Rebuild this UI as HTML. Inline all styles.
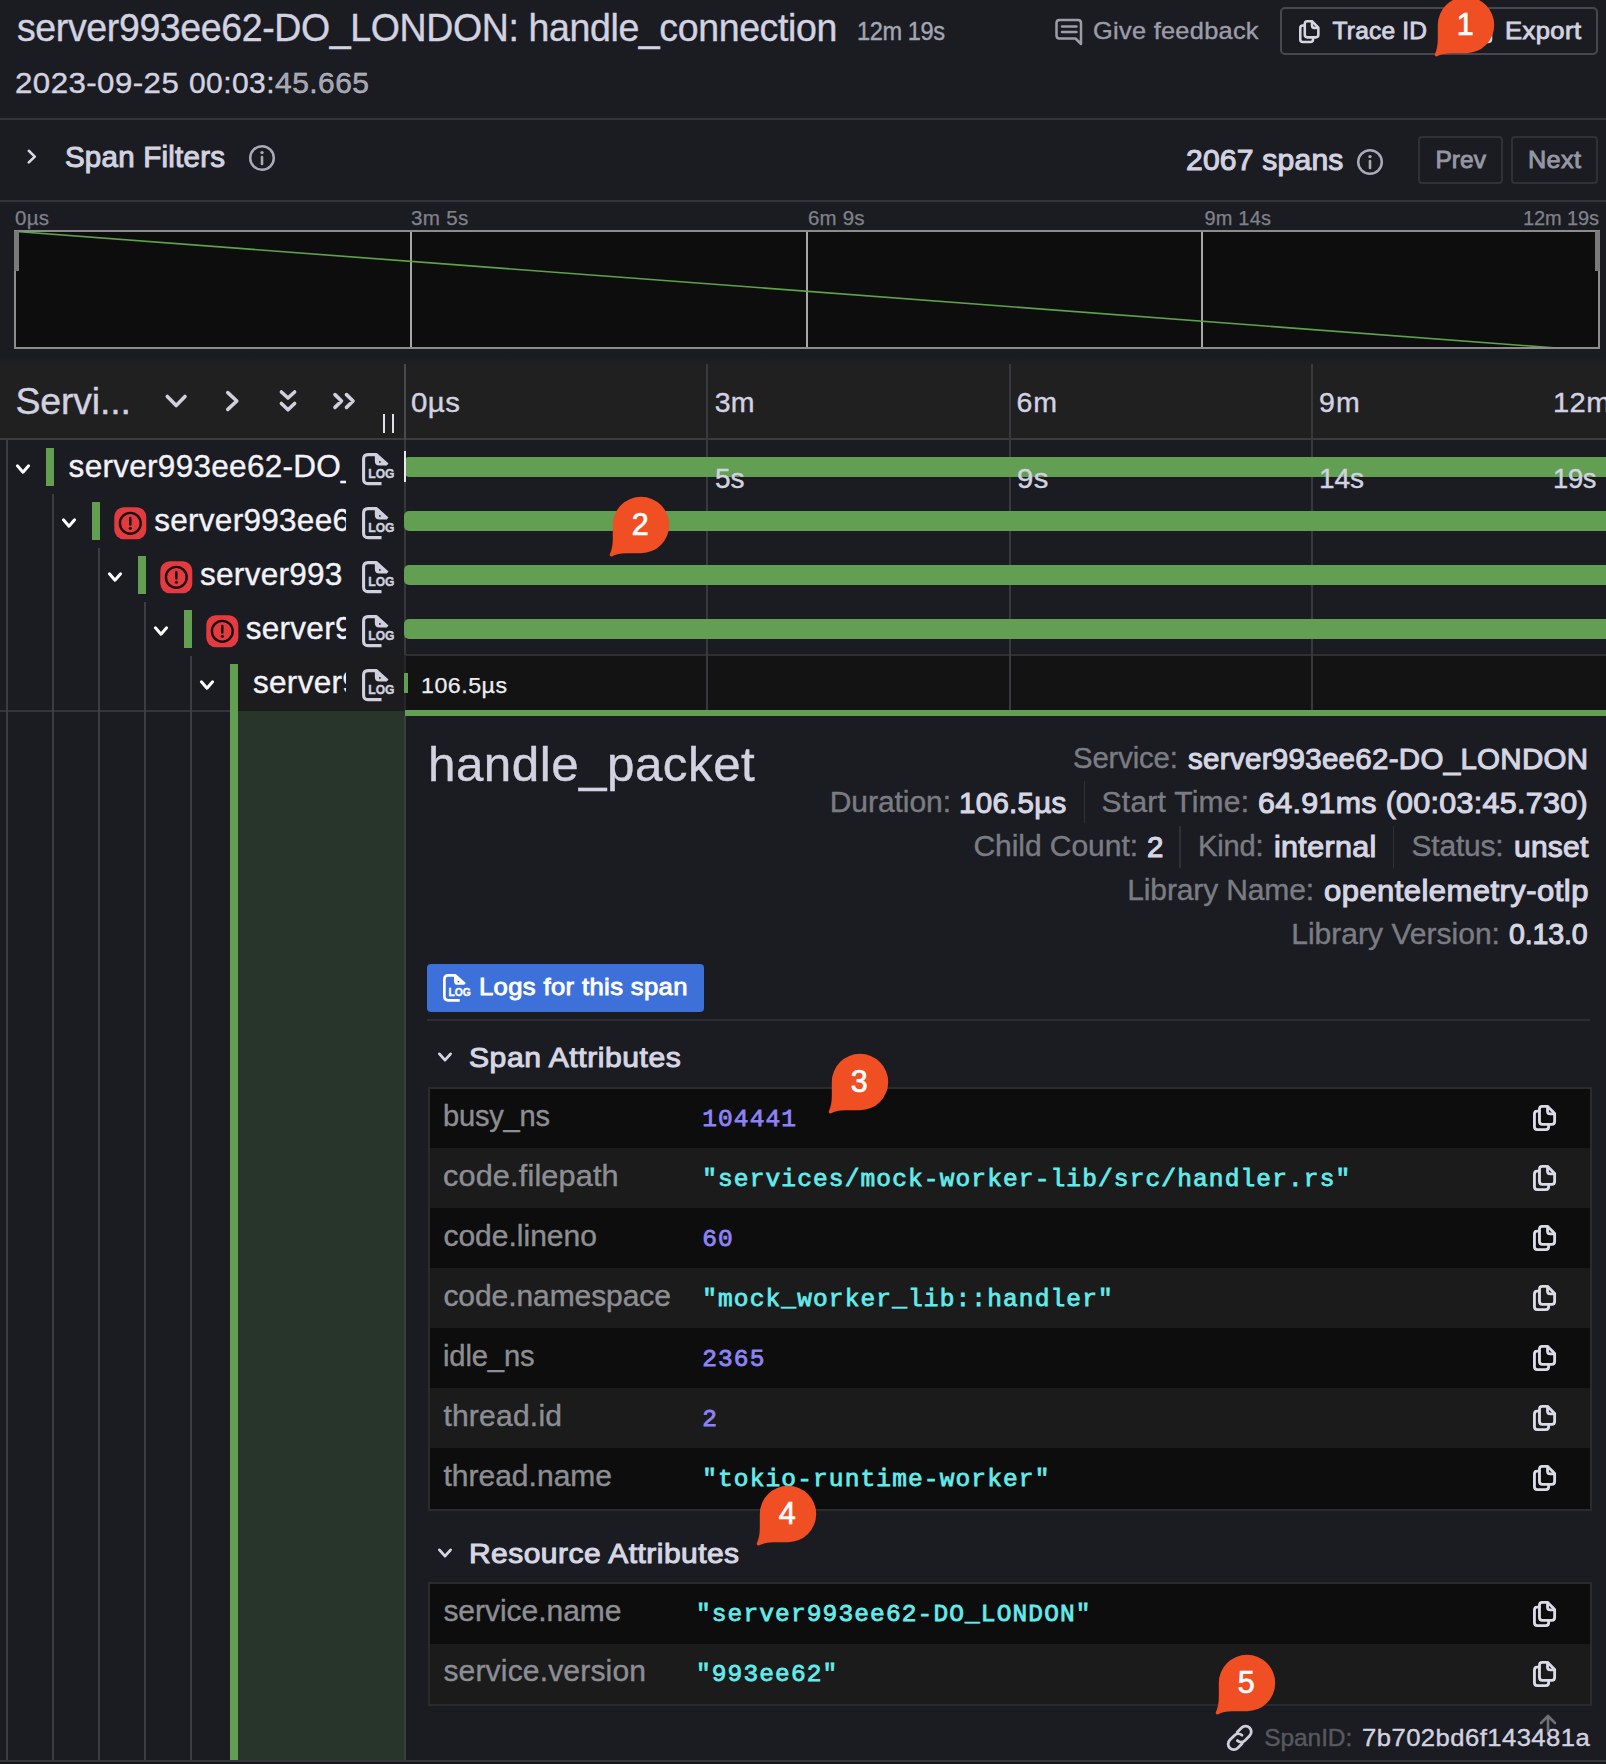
<!DOCTYPE html>
<html lang="en"><head><meta charset="utf-8"><title>Trace view</title>
<style>
html,body{margin:0;padding:0;background:#1a1c21;}
body{width:1606px;height:1764px;position:relative;overflow:hidden;font-family:"Liberation Sans",sans-serif;}
.r{position:absolute;box-sizing:content-box;display:block}
.t{position:absolute;white-space:nowrap;line-height:1;transform-origin:0 50%;}
.ls{font-family:"Liberation Sans",sans-serif;font-weight:400}
.lsb{font-family:"Liberation Sans",sans-serif;font-weight:700}
.lm{font-family:"Liberation Mono",monospace;font-weight:400}
.lmb{font-family:"Liberation Mono",monospace;font-weight:700}
</style></head><body>
<div class="t ls " style="left:17.0px;top:8.3px;font-size:39.5px;letter-spacing:-0.39px;color:#d2d2e0;transform:scaleX(0.9489);-webkit-text-stroke:0.4px #d2d2e0;">server993ee62-DO_LONDON: handle_connection</div>
<div class="t ls " style="left:856.5px;top:19.2px;font-size:25.5px;letter-spacing:-0.44px;color:#a4a5b2;transform:scaleX(0.9256);-webkit-text-stroke:0.4px #a4a5b2;">12m 19s</div>
<div class="t ls " style="left:15.0px;top:67.8px;font-size:30px;letter-spacing:0.44px;color:#d2d2e0;transform:scaleX(1.0404);-webkit-text-stroke:0.4px #d2d2e0;">2023-09-25</div>
<div class="t ls " style="left:188.9px;top:67.8px;font-size:30px;letter-spacing:0.45px;color:#d2d2e0;-webkit-text-stroke:0.4px #d2d2e0;">00:03:<span style="color:#a2a2ab">45.665</span></div>
<svg class="r" style="left:1054px;top:17px;" width="31" height="30" viewBox="0 0 31 30"><path d="M5.5 3 H24 Q27 3 27 6 V27 L21.5 21.5 H5.5 Q2.5 21.5 2.5 18.5 V6 Q2.5 3 5.5 3 Z" fill="none" stroke="#9c9da9" stroke-width="2.5" stroke-linejoin="round"/><path d="M8 9.5 H22.5 M8 15 H22.5" stroke="#9c9da9" stroke-width="2.5" stroke-linecap="round"/></svg>
<div class="t ls " style="left:1093.0px;top:18.6px;font-size:24.5px;letter-spacing:0.29px;color:#9c9da9;transform:scaleX(1.0340);-webkit-text-stroke:0.4px #9c9da9;">Give feedback</div>
<div class="r" style="left:1280.3px;top:6.5px;width:314px;height:44px;border:2px solid #47484e;border-radius:5px"></div>
<div class="r" style="left:1452px;top:7px;width:2px;height:47px;background:#47484e;"></div>
<svg class="r" style="left:1299px;top:19.5px;" width="22.1" height="24.6" viewBox="0 0 26 29"><g fill="none" stroke="#d6d6e2" stroke-width="3" stroke-linejoin="round" stroke-linecap="round"><path d="M9.8 1.5 H15.5 L22.8 9 V17.5 Q22.8 20.5 19.8 20.5 H9.8 Q6.8 20.5 6.8 17.5 V4.5 Q6.8 1.5 9.8 1.5 Z"/><path d="M15.3 2 V6.5 Q15.3 9.3 18 9.3 H22"/><path d="M6.5 6.5 H4.5 Q1.5 6.5 1.5 9.5 V23 Q1.5 26 4.5 26 H13.5 Q16.5 26 16.5 23 V21"/></g></svg>
<div class="t ls " style="left:1332.6px;top:18.6px;font-size:24.5px;letter-spacing:0.20px;color:#d2d2e0;-webkit-text-stroke:0.88px #d2d2e0;">Trace ID</div>
<svg class="r" style="left:1470px;top:19px;" width="24" height="26" viewBox="0 0 24 26"><path d="M3 14 V20 Q3 23 6 23 H18 Q21 23 21 20 V14 M12 3 V16 M7 8 L12 3 L17 8" fill="none" stroke="#d6d6e2" stroke-width="2.6" stroke-linecap="round" stroke-linejoin="round"/></svg>
<div class="t ls " style="left:1505.0px;top:18.6px;font-size:24.5px;letter-spacing:0.40px;color:#d2d2e0;transform:scaleX(1.0440);-webkit-text-stroke:0.88px #d2d2e0;">Export</div>
<div class="r" style="left:0px;top:118px;width:1606px;height:2px;background:#33343a;"></div>
<div class="r" style="left:0px;top:200px;width:1606px;height:2px;background:#33343a;"></div>
<svg class="r" style="left:24px;top:144px;" width="18" height="24" viewBox="0 0 18 24"><path d="M4.8 6.8 L10.8 12.6 L4.8 18.4" fill="none" stroke="#d8d8e4" stroke-width="2.6" stroke-linecap="round" stroke-linejoin="round"/></svg>
<div class="t ls " style="left:64.9px;top:142.3px;font-size:29.5px;letter-spacing:0.25px;color:#d2d2e0;-webkit-text-stroke:1.06px #d2d2e0;">Span Filters</div>
<svg class="r" style="left:247px;top:142.9px;" width="30" height="30" viewBox="0 0 30 30"><circle cx="15" cy="15" r="11.8" fill="none" stroke="#a9a9b7" stroke-width="2.5"/><path d="M15 14 V21" stroke="#a9a9b7" stroke-width="2.6" stroke-linecap="round"/><circle cx="15" cy="9.6" r="1.7" fill="#a9a9b7"/></svg>
<div class="t ls " style="left:1185.6px;top:145.3px;font-size:29.5px;letter-spacing:0.21px;color:#d2d2e0;transform:scaleX(1.0191);-webkit-text-stroke:1.06px #d2d2e0;">2067 spans</div>
<svg class="r" style="left:1354.8px;top:146.7px;" width="30" height="30" viewBox="0 0 30 30"><circle cx="15" cy="15" r="11.8" fill="none" stroke="#a9a9b7" stroke-width="2.5"/><path d="M15 14 V21" stroke="#a9a9b7" stroke-width="2.6" stroke-linecap="round"/><circle cx="15" cy="9.6" r="1.7" fill="#a9a9b7"/></svg>
<div class="r" style="left:1418.3px;top:136.3px;width:80.5px;height:43.5px;border:2px solid #303136;border-radius:4px"></div>
<div class="r" style="left:1510.8px;top:136.3px;width:83.5px;height:43.5px;border:2px solid #303136;border-radius:4px"></div>
<div class="t ls " style="left:1435.4px;top:148.1px;font-size:24.5px;letter-spacing:0.07px;color:#9697a3;-webkit-text-stroke:0.88px #9697a3;">Prev</div>
<div class="t ls " style="left:1528.0px;top:148.1px;font-size:24.5px;letter-spacing:0.34px;color:#9697a3;transform:scaleX(1.0313);-webkit-text-stroke:0.88px #9697a3;">Next</div>
<div class="t ls " style="left:14.7px;top:207.6px;font-size:20px;letter-spacing:0.28px;color:#80818a;transform:scaleX(1.0267);-webkit-text-stroke:0.25px #80818a;">0µs</div>
<div class="t ls " style="left:411.3px;top:207.6px;font-size:20px;letter-spacing:0.27px;color:#80818a;transform:scaleX(1.0302);-webkit-text-stroke:0.25px #80818a;">3m 5s</div>
<div class="t ls " style="left:808.0px;top:207.6px;font-size:20px;letter-spacing:0.20px;color:#80818a;transform:scaleX(1.0224);-webkit-text-stroke:0.25px #80818a;">6m 9s</div>
<div class="t ls " style="left:1204.4px;top:207.6px;font-size:20px;letter-spacing:0.20px;color:#80818a;-webkit-text-stroke:0.25px #80818a;">9m 14s</div>
<div class="t ls " style="left:1523.0px;top:207.6px;font-size:20px;letter-spacing:-0.12px;color:#80818a;-webkit-text-stroke:0.25px #80818a;">12m 19s</div>
<div class="r" style="left:14px;top:230px;width:1582px;height:115px;border:2px solid #8c8c8c;background:#0d0d0e"></div>
<div class="r" style="left:410px;top:232px;width:2px;height:115px;background:#a8a8a8;"></div>
<div class="r" style="left:805.5px;top:232px;width:2px;height:115px;background:#a8a8a8;"></div>
<div class="r" style="left:1201px;top:232px;width:2px;height:115px;background:#a8a8a8;"></div>
<svg class="r" style="left:16px;top:232px;" width="1582" height="115" viewBox="0 0 1582 115"><line x1="0" y1="-0.5" x2="1547" y2="116.5" stroke="#5fa24c" stroke-width="1.6"/></svg>
<div class="r" style="left:14px;top:231px;width:5px;height:40px;background:#7a7a7a;"></div>
<div class="r" style="left:1595px;top:231px;width:5px;height:40px;background:#7a7a7a;"></div>
<div class="r" style="left:0;top:354px;width:1606px;height:14px;background:linear-gradient(#1a1c21,#202021)"></div>
<div class="r" style="left:0px;top:368px;width:1606px;height:70px;background:#202021;"></div>
<div class="r" style="left:0px;top:438px;width:1606px;height:2px;background:#3b3b3e;"></div>
<div class="t ls " style="left:15.4px;top:383.3px;font-size:37.5px;letter-spacing:-0.16px;color:#d2d2e0;-webkit-text-stroke:0.4px #d2d2e0;">Servi...</div>
<svg class="r" style="left:160px;top:386px;" width="32" height="30" viewBox="0 0 32 30"><path d="M7.3 10.5 L16.2 19.5 L25 10.5" fill="none" stroke="#d0d0de" stroke-width="3.6" stroke-linecap="round" stroke-linejoin="round"/></svg>
<svg class="r" style="left:218px;top:386px;" width="28" height="30" viewBox="0 0 28 30"><path d="M9.8 6.6 L18.8 15 L9.8 23.4" fill="none" stroke="#d0d0de" stroke-width="3.6" stroke-linecap="round" stroke-linejoin="round"/></svg>
<svg class="r" style="left:272px;top:386px;" width="32" height="30" viewBox="0 0 32 30"><path d="M9.4 6 L16 12 L22.6 6 M9.4 17.5 L16 23.8 L22.6 17.5" fill="none" stroke="#d0d0de" stroke-width="3.6" stroke-linecap="round" stroke-linejoin="round"/></svg>
<svg class="r" style="left:328px;top:386px;" width="32" height="30" viewBox="0 0 32 30"><path d="M7 8.6 L13.5 15 L7 21.4 M18.5 8.6 L25 15 L18.5 21.4" fill="none" stroke="#d0d0de" stroke-width="3.6" stroke-linecap="round" stroke-linejoin="round"/></svg>
<div class="r" style="left:383.4px;top:414px;width:2px;height:18.5px;background:#e0e0ea;"></div>
<div class="r" style="left:392.4px;top:414px;width:2px;height:18.5px;background:#e0e0ea;"></div>
<div class="r" style="left:406px;top:655px;width:1200px;height:56px;background:#131313;"></div>
<div class="r" style="left:406px;top:654px;width:1200px;height:1.5px;background:#303033;"></div>
<div class="r" style="left:706px;top:364px;width:2px;height:347px;background:#38393c;"></div>
<div class="r" style="left:1009px;top:364px;width:2px;height:347px;background:#38393c;"></div>
<div class="r" style="left:1311px;top:364px;width:2px;height:347px;background:#38393c;"></div>
<div class="r" style="left:404px;top:364px;width:2px;height:76px;background:#48494d;"></div>
<div class="r" style="left:404px;top:440px;width:2px;height:215px;background:#37383c;"></div>
<div class="r" style="left:238px;top:655px;width:166.5px;height:56px;background:#1c1c1e;"></div>
<div class="r" style="left:404.3px;top:655px;width:1.4px;height:56px;background:#26272a;"></div>
<div class="r" style="left:0px;top:710px;width:232px;height:1.5px;background:#34353a;"></div>
<div class="t ls " style="left:411.4px;top:388.2px;font-size:28.5px;letter-spacing:0.48px;color:#d2d2e0;transform:scaleX(1.0320);-webkit-text-stroke:0.4px #d2d2e0;">0µs</div>
<div class="t ls " style="left:714.8px;top:388.2px;font-size:28.5px;letter-spacing:0.21px;color:#d2d2e0;-webkit-text-stroke:0.4px #d2d2e0;">3m</div>
<div class="t ls " style="left:1016.5px;top:388.2px;font-size:28.5px;letter-spacing:0.91px;color:#d2d2e0;-webkit-text-stroke:0.4px #d2d2e0;">6m</div>
<div class="t ls " style="left:1319.0px;top:388.2px;font-size:28.5px;letter-spacing:1.11px;color:#d2d2e0;-webkit-text-stroke:0.4px #d2d2e0;">9m</div>
<div class="t ls " style="left:1552.5px;top:388.2px;font-size:28.5px;letter-spacing:0.40px;color:#d2d2e0;transform:scaleX(1.0223);-webkit-text-stroke:0.4px #d2d2e0;">12m</div>
<div class="r" style="left:6.2px;top:440px;width:1.6px;height:1324px;background:#3c3d42;"></div>
<div class="r" style="left:52.2px;top:494px;width:1.6px;height:1270px;background:#3c3d42;"></div>
<div class="r" style="left:98.2px;top:548px;width:1.6px;height:1216px;background:#3c3d42;"></div>
<div class="r" style="left:144.2px;top:602px;width:1.6px;height:1162px;background:#3c3d42;"></div>
<div class="r" style="left:190.2px;top:656px;width:1.6px;height:1108px;background:#3c3d42;"></div>
<svg class="r" style="left:11px;top:458.8px;" width="24" height="20" viewBox="0 0 24 20"><path d="M6.4 6.8 L12 13.2 L17.6 6.8" fill="none" stroke="#ffffff" stroke-width="3" stroke-linecap="round" stroke-linejoin="round"/></svg>
<div class="r" style="left:46px;top:448px;width:8px;height:38px;background:#639f52;"></div>
<div class="t ls" style="left:68.6px;top:451.3px;width:277.4px;overflow:hidden;font-size:31.5px;letter-spacing:0.29px;color:#f2f2f8;height:42px;-webkit-text-stroke:0.4px #f2f2f8">server993ee62-DO_LONDON</div>
<svg class="r" style="left:362px;top:453px;" width="34.0" height="33.0" viewBox="0 0 34 33"><g fill="none" stroke="#d0d0de" stroke-width="3.1" stroke-linejoin="round" stroke-linecap="butt"><path d="M19.5 30.6 H6 Q1.6 30.6 1.6 26.2 V6 Q1.6 1.6 6 1.6 H14.4 L25.5 11.6"/><path d="M14.4 2.5 V8 Q14.4 11 17.4 11 H24" /></g><path d="M16 5.2 L22 10.6 H17.4 Q16 10.6 16 9.2 Z" fill="#d0d0de" stroke="#d0d0de" stroke-width="1.2" stroke-linejoin="round"/><circle cx="17.9" cy="8.9" r="0.9" fill="#1a1c21"/><text x="6.3" y="25.2" font-family="Liberation Sans,sans-serif" font-weight="700" font-size="13.6" textLength="26.2" lengthAdjust="spacingAndGlyphs" fill="#d0d0de" stroke="#d0d0de" stroke-width="0.45">LOG</text></svg>
<div class="r" style="left:404.4px;top:457px;width:1202px;height:20px;background:#639f52;border-radius:5px 0 0 5px"></div>
<svg class="r" style="left:57px;top:512.8px;" width="24" height="20" viewBox="0 0 24 20"><path d="M6.4 6.8 L12 13.2 L17.6 6.8" fill="none" stroke="#ffffff" stroke-width="3" stroke-linecap="round" stroke-linejoin="round"/></svg>
<div class="r" style="left:92px;top:502px;width:8px;height:38px;background:#639f52;"></div>
<svg class="r" style="left:113.7px;top:506.6px;" width="33" height="33" viewBox="0 0 33 33"><rect x="0.3" y="0.3" width="32" height="32" rx="9.5" fill="#e33b3f"/><circle cx="16.3" cy="16.3" r="10.4" fill="none" stroke="#1c0d0d" stroke-width="2.4"/><path d="M16.3 11 V17.6" stroke="#1c0d0d" stroke-width="2.5" stroke-linecap="round"/><circle cx="16.3" cy="21.2" r="1.55" fill="#1c0d0d"/></svg>
<div class="t ls" style="left:154.2px;top:505.3px;width:191.8px;overflow:hidden;font-size:31.5px;letter-spacing:0.29px;color:#f2f2f8;height:42px;-webkit-text-stroke:0.4px #f2f2f8">server993ee62-DO_LONDON</div>
<svg class="r" style="left:362px;top:507px;" width="34.0" height="33.0" viewBox="0 0 34 33"><g fill="none" stroke="#d0d0de" stroke-width="3.1" stroke-linejoin="round" stroke-linecap="butt"><path d="M19.5 30.6 H6 Q1.6 30.6 1.6 26.2 V6 Q1.6 1.6 6 1.6 H14.4 L25.5 11.6"/><path d="M14.4 2.5 V8 Q14.4 11 17.4 11 H24" /></g><path d="M16 5.2 L22 10.6 H17.4 Q16 10.6 16 9.2 Z" fill="#d0d0de" stroke="#d0d0de" stroke-width="1.2" stroke-linejoin="round"/><circle cx="17.9" cy="8.9" r="0.9" fill="#1a1c21"/><text x="6.3" y="25.2" font-family="Liberation Sans,sans-serif" font-weight="700" font-size="13.6" textLength="26.2" lengthAdjust="spacingAndGlyphs" fill="#d0d0de" stroke="#d0d0de" stroke-width="0.45">LOG</text></svg>
<div class="r" style="left:404.4px;top:511px;width:1202px;height:20px;background:#639f52;border-radius:5px 0 0 5px"></div>
<svg class="r" style="left:103px;top:566.8px;" width="24" height="20" viewBox="0 0 24 20"><path d="M6.4 6.8 L12 13.2 L17.6 6.8" fill="none" stroke="#ffffff" stroke-width="3" stroke-linecap="round" stroke-linejoin="round"/></svg>
<div class="r" style="left:138px;top:556px;width:8px;height:38px;background:#639f52;"></div>
<svg class="r" style="left:159.7px;top:560.6px;" width="33" height="33" viewBox="0 0 33 33"><rect x="0.3" y="0.3" width="32" height="32" rx="9.5" fill="#e33b3f"/><circle cx="16.3" cy="16.3" r="10.4" fill="none" stroke="#1c0d0d" stroke-width="2.4"/><path d="M16.3 11 V17.6" stroke="#1c0d0d" stroke-width="2.5" stroke-linecap="round"/><circle cx="16.3" cy="21.2" r="1.55" fill="#1c0d0d"/></svg>
<div class="t ls" style="left:200px;top:559.3px;width:146.0px;overflow:hidden;font-size:31.5px;letter-spacing:0.29px;color:#f2f2f8;height:42px;-webkit-text-stroke:0.4px #f2f2f8">server993</div>
<svg class="r" style="left:362px;top:561px;" width="34.0" height="33.0" viewBox="0 0 34 33"><g fill="none" stroke="#d0d0de" stroke-width="3.1" stroke-linejoin="round" stroke-linecap="butt"><path d="M19.5 30.6 H6 Q1.6 30.6 1.6 26.2 V6 Q1.6 1.6 6 1.6 H14.4 L25.5 11.6"/><path d="M14.4 2.5 V8 Q14.4 11 17.4 11 H24" /></g><path d="M16 5.2 L22 10.6 H17.4 Q16 10.6 16 9.2 Z" fill="#d0d0de" stroke="#d0d0de" stroke-width="1.2" stroke-linejoin="round"/><circle cx="17.9" cy="8.9" r="0.9" fill="#1a1c21"/><text x="6.3" y="25.2" font-family="Liberation Sans,sans-serif" font-weight="700" font-size="13.6" textLength="26.2" lengthAdjust="spacingAndGlyphs" fill="#d0d0de" stroke="#d0d0de" stroke-width="0.45">LOG</text></svg>
<div class="r" style="left:404.4px;top:565px;width:1202px;height:20px;background:#639f52;border-radius:5px 0 0 5px"></div>
<svg class="r" style="left:149px;top:620.8px;" width="24" height="20" viewBox="0 0 24 20"><path d="M6.4 6.8 L12 13.2 L17.6 6.8" fill="none" stroke="#ffffff" stroke-width="3" stroke-linecap="round" stroke-linejoin="round"/></svg>
<div class="r" style="left:184px;top:610px;width:8px;height:38px;background:#639f52;"></div>
<svg class="r" style="left:205.7px;top:614.6px;" width="33" height="33" viewBox="0 0 33 33"><rect x="0.3" y="0.3" width="32" height="32" rx="9.5" fill="#e33b3f"/><circle cx="16.3" cy="16.3" r="10.4" fill="none" stroke="#1c0d0d" stroke-width="2.4"/><path d="M16.3 11 V17.6" stroke="#1c0d0d" stroke-width="2.5" stroke-linecap="round"/><circle cx="16.3" cy="21.2" r="1.55" fill="#1c0d0d"/></svg>
<div class="t ls" style="left:245.7px;top:613.3px;width:100.3px;overflow:hidden;font-size:31.5px;letter-spacing:0.29px;color:#f2f2f8;height:42px;-webkit-text-stroke:0.4px #f2f2f8">server993ee62</div>
<svg class="r" style="left:362px;top:615px;" width="34.0" height="33.0" viewBox="0 0 34 33"><g fill="none" stroke="#d0d0de" stroke-width="3.1" stroke-linejoin="round" stroke-linecap="butt"><path d="M19.5 30.6 H6 Q1.6 30.6 1.6 26.2 V6 Q1.6 1.6 6 1.6 H14.4 L25.5 11.6"/><path d="M14.4 2.5 V8 Q14.4 11 17.4 11 H24" /></g><path d="M16 5.2 L22 10.6 H17.4 Q16 10.6 16 9.2 Z" fill="#d0d0de" stroke="#d0d0de" stroke-width="1.2" stroke-linejoin="round"/><circle cx="17.9" cy="8.9" r="0.9" fill="#1a1c21"/><text x="6.3" y="25.2" font-family="Liberation Sans,sans-serif" font-weight="700" font-size="13.6" textLength="26.2" lengthAdjust="spacingAndGlyphs" fill="#d0d0de" stroke="#d0d0de" stroke-width="0.45">LOG</text></svg>
<div class="r" style="left:404.4px;top:619px;width:1202px;height:20px;background:#639f52;border-radius:5px 0 0 5px"></div>
<svg class="r" style="left:195px;top:674.8px;" width="24" height="20" viewBox="0 0 24 20"><path d="M6.4 6.8 L12 13.2 L17.6 6.8" fill="none" stroke="#ffffff" stroke-width="3" stroke-linecap="round" stroke-linejoin="round"/></svg>
<div class="t ls" style="left:253px;top:667.3px;width:93.0px;overflow:hidden;font-size:31.5px;letter-spacing:0.29px;color:#f2f2f8;height:42px;-webkit-text-stroke:0.4px #f2f2f8">server993ee62</div>
<svg class="r" style="left:362px;top:669px;" width="34.0" height="33.0" viewBox="0 0 34 33"><g fill="none" stroke="#d0d0de" stroke-width="3.1" stroke-linejoin="round" stroke-linecap="butt"><path d="M19.5 30.6 H6 Q1.6 30.6 1.6 26.2 V6 Q1.6 1.6 6 1.6 H14.4 L25.5 11.6"/><path d="M14.4 2.5 V8 Q14.4 11 17.4 11 H24" /></g><path d="M16 5.2 L22 10.6 H17.4 Q16 10.6 16 9.2 Z" fill="#d0d0de" stroke="#d0d0de" stroke-width="1.2" stroke-linejoin="round"/><circle cx="17.9" cy="8.9" r="0.9" fill="#1a1c21"/><text x="6.3" y="25.2" font-family="Liberation Sans,sans-serif" font-weight="700" font-size="13.6" textLength="26.2" lengthAdjust="spacingAndGlyphs" fill="#d0d0de" stroke="#d0d0de" stroke-width="0.45">LOG</text></svg>
<div class="r" style="left:230px;top:664px;width:8px;height:1099px;background:#639f52;border-radius:0 0 0 4px"></div>
<div class="r" style="left:238px;top:711px;width:167px;height:1052px;background:#28352b;"></div>
<div class="r" style="left:404.3px;top:716px;width:1.4px;height:1047px;background:#364239;"></div>
<div class="r" style="left:404.4px;top:451px;width:1.8px;height:31px;background:#e8e8f0;"></div>
<div class="r" style="left:404.4px;top:673px;width:3.3px;height:19.5px;background:#639f52;"></div>
<div class="t ls " style="left:420.6px;top:674.6px;font-size:22px;letter-spacing:0.46px;color:#ececf2;transform:scaleX(1.0554);-webkit-text-stroke:0.25px #ececf2;">106.5µs</div>
<div class="t ls " style="left:714.8px;top:463.9px;font-size:28.5px;letter-spacing:-0.18px;color:#d2d2e0;transform:scaleX(0.9825);-webkit-text-stroke:0.4px #d2d2e0;z-index:5">5s</div>
<div class="t ls " style="left:1016.5px;top:463.9px;font-size:28.5px;letter-spacing:0.54px;color:#d2d2e0;transform:scaleX(1.0279);-webkit-text-stroke:0.4px #d2d2e0;z-index:5">9s</div>
<div class="t ls " style="left:1319.0px;top:463.9px;font-size:28.5px;letter-spacing:-0.12px;color:#d2d2e0;transform:scaleX(0.9845);-webkit-text-stroke:0.4px #d2d2e0;z-index:5">14s</div>
<div class="t ls " style="left:1552.5px;top:463.9px;font-size:28.5px;letter-spacing:-0.32px;color:#d2d2e0;transform:scaleX(0.9600);-webkit-text-stroke:0.4px #d2d2e0;z-index:5">19s</div>
<div class="r" style="left:405px;top:710px;width:1201px;height:6px;background:#639f52;"></div>
<div class="t ls " style="left:428.2px;top:741.4px;font-size:48px;letter-spacing:0.47px;color:#d2d2e0;transform:scaleX(1.0279);-webkit-text-stroke:0.4px #d2d2e0;">handle_packet</div>
<div class="t ls " style="left:1073.2px;top:743.2px;font-size:30px;letter-spacing:-0.13px;color:#7b7c83;transform:scaleX(0.9753);-webkit-text-stroke:0.4px #7b7c83;">Service:</div>
<div class="t ls " style="left:1188.0px;top:743.6px;font-size:29.5px;letter-spacing:0.30px;color:#d6d6e4;-webkit-text-stroke:1.06px #d6d6e4;">server993ee62-DO_LONDON</div>
<div class="t ls " style="left:829.7px;top:787.3px;font-size:30px;letter-spacing:-0.05px;color:#7b7c83;-webkit-text-stroke:0.4px #7b7c83;">Duration:</div>
<div class="t ls " style="left:959.0px;top:787.7px;font-size:29.5px;letter-spacing:0.29px;color:#d6d6e4;-webkit-text-stroke:1.06px #d6d6e4;">106.5µs</div>
<div class="r" style="left:1083.5px;top:781px;width:1.6px;height:42px;background:#303136;"></div>
<div class="t ls " style="left:1101.6px;top:787.3px;font-size:30px;letter-spacing:0.24px;color:#7b7c83;-webkit-text-stroke:0.4px #7b7c83;">Start Time:</div>
<div class="t ls " style="left:1258.3px;top:787.7px;font-size:29.5px;letter-spacing:0.30px;color:#d6d6e4;transform:scaleX(1.0315);-webkit-text-stroke:1.06px #d6d6e4;">64.91ms (00:03:45.730)</div>
<div class="t ls " style="left:973.4px;top:831.1px;font-size:30px;letter-spacing:-0.04px;color:#7b7c83;-webkit-text-stroke:0.4px #7b7c83;">Child Count:</div>
<div class="t ls " style="left:1147.0px;top:831.5px;font-size:29.5px;letter-spacing:0.00px;color:#d6d6e4;-webkit-text-stroke:1.06px #d6d6e4;">2</div>
<div class="r" style="left:1179.3px;top:826px;width:1.6px;height:42px;background:#303136;"></div>
<div class="t ls " style="left:1198.0px;top:831.1px;font-size:30px;letter-spacing:-0.19px;color:#7b7c83;transform:scaleX(0.9684);-webkit-text-stroke:0.4px #7b7c83;">Kind:</div>
<div class="t ls " style="left:1273.7px;top:831.5px;font-size:29.5px;letter-spacing:0.30px;color:#d6d6e4;transform:scaleX(1.0338);-webkit-text-stroke:1.06px #d6d6e4;">internal</div>
<div class="r" style="left:1392.8px;top:826px;width:1.6px;height:42px;background:#303136;"></div>
<div class="t ls " style="left:1411.5px;top:831.1px;font-size:30px;letter-spacing:-0.21px;color:#7b7c83;-webkit-text-stroke:0.4px #7b7c83;">Status:</div>
<div class="t ls " style="left:1513.6px;top:831.5px;font-size:29.5px;letter-spacing:0.22px;color:#d6d6e4;transform:scaleX(1.0186);-webkit-text-stroke:1.06px #d6d6e4;">unset</div>
<div class="t ls " style="left:1127.3px;top:875.2px;font-size:30px;letter-spacing:-0.14px;color:#7b7c83;-webkit-text-stroke:0.4px #7b7c83;">Library Name:</div>
<div class="t ls " style="left:1323.6px;top:875.6px;font-size:29.5px;letter-spacing:0.45px;color:#d6d6e4;transform:scaleX(1.0493);-webkit-text-stroke:1.06px #d6d6e4;">opentelemetry-otlp</div>
<div class="t ls " style="left:1291.2px;top:919.0px;font-size:30px;letter-spacing:0.02px;color:#7b7c83;-webkit-text-stroke:0.4px #7b7c83;">Library Version:</div>
<div class="t ls " style="left:1509.4px;top:919.4px;font-size:29.5px;letter-spacing:-0.18px;color:#d6d6e4;transform:scaleX(0.9687);-webkit-text-stroke:1.06px #d6d6e4;">0.13.0</div>
<div class="r" style="left:427px;top:964px;width:277px;height:48px;background:#3d71d9;border-radius:4px"></div>
<svg class="r" style="left:443px;top:974.2px;" width="29.2" height="28.4" viewBox="0 0 34 33"><g fill="none" stroke="#ffffff" stroke-width="3.1" stroke-linejoin="round" stroke-linecap="butt"><path d="M19.5 30.6 H6 Q1.6 30.6 1.6 26.2 V6 Q1.6 1.6 6 1.6 H14.4 L25.5 11.6"/><path d="M14.4 2.5 V8 Q14.4 11 17.4 11 H24" /></g><path d="M16 5.2 L22 10.6 H17.4 Q16 10.6 16 9.2 Z" fill="#ffffff" stroke="#ffffff" stroke-width="1.2" stroke-linejoin="round"/><circle cx="17.9" cy="8.9" r="0.9" fill="#1a1c21"/><text x="6.3" y="25.2" font-family="Liberation Sans,sans-serif" font-weight="700" font-size="13.6" textLength="26.2" lengthAdjust="spacingAndGlyphs" fill="#ffffff" stroke="#ffffff" stroke-width="0.45">LOG</text></svg>
<div class="t ls " style="left:479.0px;top:975.3px;font-size:24.5px;letter-spacing:0.34px;color:#ffffff;transform:scaleX(1.0466);-webkit-text-stroke:0.88px #ffffff;">Logs for this span</div>
<div class="r" style="left:427px;top:1018.5px;width:1163px;height:2px;background:#2c2d32;"></div>
<svg class="r" style="left:433px;top:1047.0px;" width="24" height="20" viewBox="0 0 24 20"><path d="M6.4 6.9 L12 13.1 L17.6 6.9" fill="none" stroke="#d6d6e2" stroke-width="2.8" stroke-linecap="round" stroke-linejoin="round"/></svg>
<div class="t ls " style="left:468.8px;top:1042.9px;font-size:28.5px;letter-spacing:0.50px;color:#d6d6e4;transform:scaleX(1.0571);-webkit-text-stroke:1.03px #d6d6e4;">Span Attributes</div>
<div class="r" style="left:427.5px;top:1086.5px;width:1160px;height:420px;border:2px solid #2b2b2e;background:#0d0d0d"></div>
<div class="t ls " style="left:443.4px;top:1100.7px;font-size:30px;letter-spacing:-0.20px;color:#8d8e93;transform:scaleX(0.9689);-webkit-text-stroke:0.4px #8d8e93;">busy_ns</div>
<div class="t lm" style="left:702.2px;top:1107.7px;font-size:24.5px;letter-spacing:1.13px;color:#8e83f7;-webkit-text-stroke:0.8px #8e83f7">104441</div>
<svg class="r" style="left:1532.8px;top:1105.0px;" width="24.7" height="27.5" viewBox="0 0 26 29"><g fill="none" stroke="#dcdce8" stroke-width="3" stroke-linejoin="round" stroke-linecap="round"><path d="M9.8 1.5 H15.5 L22.8 9 V17.5 Q22.8 20.5 19.8 20.5 H9.8 Q6.8 20.5 6.8 17.5 V4.5 Q6.8 1.5 9.8 1.5 Z"/><path d="M15.3 2 V6.5 Q15.3 9.3 18 9.3 H22"/><path d="M6.5 6.5 H4.5 Q1.5 6.5 1.5 9.5 V23 Q1.5 26 4.5 26 H13.5 Q16.5 26 16.5 23 V21"/></g></svg>
<div class="r" style="left:429.5px;top:1148.0px;width:1160px;height:60px;background:#1b1b1c;"></div>
<div class="t ls " style="left:443.4px;top:1160.7px;font-size:30px;letter-spacing:0.18px;color:#8d8e93;transform:scaleX(1.0193);-webkit-text-stroke:0.4px #8d8e93;">code.filepath</div>
<div class="t lm" style="left:702.2px;top:1167.7px;font-size:24.5px;letter-spacing:1.13px;color:#62ecec;-webkit-text-stroke:0.8px #62ecec">"services/mock-worker-lib/src/handler.rs"</div>
<svg class="r" style="left:1532.8px;top:1165.0px;" width="24.7" height="27.5" viewBox="0 0 26 29"><g fill="none" stroke="#dcdce8" stroke-width="3" stroke-linejoin="round" stroke-linecap="round"><path d="M9.8 1.5 H15.5 L22.8 9 V17.5 Q22.8 20.5 19.8 20.5 H9.8 Q6.8 20.5 6.8 17.5 V4.5 Q6.8 1.5 9.8 1.5 Z"/><path d="M15.3 2 V6.5 Q15.3 9.3 18 9.3 H22"/><path d="M6.5 6.5 H4.5 Q1.5 6.5 1.5 9.5 V23 Q1.5 26 4.5 26 H13.5 Q16.5 26 16.5 23 V21"/></g></svg>
<div class="t ls " style="left:443.4px;top:1220.7px;font-size:30px;letter-spacing:0.01px;color:#8d8e93;-webkit-text-stroke:0.4px #8d8e93;">code.lineno</div>
<div class="t lm" style="left:702.2px;top:1227.7px;font-size:24.5px;letter-spacing:1.13px;color:#8e83f7;-webkit-text-stroke:0.8px #8e83f7">60</div>
<svg class="r" style="left:1532.8px;top:1225.0px;" width="24.7" height="27.5" viewBox="0 0 26 29"><g fill="none" stroke="#dcdce8" stroke-width="3" stroke-linejoin="round" stroke-linecap="round"><path d="M9.8 1.5 H15.5 L22.8 9 V17.5 Q22.8 20.5 19.8 20.5 H9.8 Q6.8 20.5 6.8 17.5 V4.5 Q6.8 1.5 9.8 1.5 Z"/><path d="M15.3 2 V6.5 Q15.3 9.3 18 9.3 H22"/><path d="M6.5 6.5 H4.5 Q1.5 6.5 1.5 9.5 V23 Q1.5 26 4.5 26 H13.5 Q16.5 26 16.5 23 V21"/></g></svg>
<div class="r" style="left:429.5px;top:1268.0px;width:1160px;height:60px;background:#1b1b1c;"></div>
<div class="t ls " style="left:443.4px;top:1280.7px;font-size:30px;letter-spacing:-0.07px;color:#8d8e93;-webkit-text-stroke:0.4px #8d8e93;">code.namespace</div>
<div class="t lm" style="left:702.2px;top:1287.7px;font-size:24.5px;letter-spacing:1.13px;color:#62ecec;-webkit-text-stroke:0.8px #62ecec">"mock_worker_lib::handler"</div>
<svg class="r" style="left:1532.8px;top:1285.0px;" width="24.7" height="27.5" viewBox="0 0 26 29"><g fill="none" stroke="#dcdce8" stroke-width="3" stroke-linejoin="round" stroke-linecap="round"><path d="M9.8 1.5 H15.5 L22.8 9 V17.5 Q22.8 20.5 19.8 20.5 H9.8 Q6.8 20.5 6.8 17.5 V4.5 Q6.8 1.5 9.8 1.5 Z"/><path d="M15.3 2 V6.5 Q15.3 9.3 18 9.3 H22"/><path d="M6.5 6.5 H4.5 Q1.5 6.5 1.5 9.5 V23 Q1.5 26 4.5 26 H13.5 Q16.5 26 16.5 23 V21"/></g></svg>
<div class="t ls " style="left:443.4px;top:1340.7px;font-size:30px;letter-spacing:-0.15px;color:#8d8e93;transform:scaleX(0.9726);-webkit-text-stroke:0.4px #8d8e93;">idle_ns</div>
<div class="t lm" style="left:702.2px;top:1347.7px;font-size:24.5px;letter-spacing:1.13px;color:#8e83f7;-webkit-text-stroke:0.8px #8e83f7">2365</div>
<svg class="r" style="left:1532.8px;top:1345.0px;" width="24.7" height="27.5" viewBox="0 0 26 29"><g fill="none" stroke="#dcdce8" stroke-width="3" stroke-linejoin="round" stroke-linecap="round"><path d="M9.8 1.5 H15.5 L22.8 9 V17.5 Q22.8 20.5 19.8 20.5 H9.8 Q6.8 20.5 6.8 17.5 V4.5 Q6.8 1.5 9.8 1.5 Z"/><path d="M15.3 2 V6.5 Q15.3 9.3 18 9.3 H22"/><path d="M6.5 6.5 H4.5 Q1.5 6.5 1.5 9.5 V23 Q1.5 26 4.5 26 H13.5 Q16.5 26 16.5 23 V21"/></g></svg>
<div class="r" style="left:429.5px;top:1388.0px;width:1160px;height:60px;background:#1b1b1c;"></div>
<div class="t ls " style="left:443.4px;top:1400.7px;font-size:30px;letter-spacing:0.23px;color:#8d8e93;-webkit-text-stroke:0.4px #8d8e93;">thread.id</div>
<div class="t lm" style="left:702.2px;top:1407.7px;font-size:24.5px;letter-spacing:1.13px;color:#8e83f7;-webkit-text-stroke:0.8px #8e83f7">2</div>
<svg class="r" style="left:1532.8px;top:1405.0px;" width="24.7" height="27.5" viewBox="0 0 26 29"><g fill="none" stroke="#dcdce8" stroke-width="3" stroke-linejoin="round" stroke-linecap="round"><path d="M9.8 1.5 H15.5 L22.8 9 V17.5 Q22.8 20.5 19.8 20.5 H9.8 Q6.8 20.5 6.8 17.5 V4.5 Q6.8 1.5 9.8 1.5 Z"/><path d="M15.3 2 V6.5 Q15.3 9.3 18 9.3 H22"/><path d="M6.5 6.5 H4.5 Q1.5 6.5 1.5 9.5 V23 Q1.5 26 4.5 26 H13.5 Q16.5 26 16.5 23 V21"/></g></svg>
<div class="t ls " style="left:443.4px;top:1460.7px;font-size:30px;letter-spacing:0.02px;color:#8d8e93;-webkit-text-stroke:0.4px #8d8e93;">thread.name</div>
<div class="t lm" style="left:702.2px;top:1467.7px;font-size:24.5px;letter-spacing:1.13px;color:#62ecec;-webkit-text-stroke:0.8px #62ecec">"tokio-runtime-worker"</div>
<svg class="r" style="left:1532.8px;top:1465.0px;" width="24.7" height="27.5" viewBox="0 0 26 29"><g fill="none" stroke="#dcdce8" stroke-width="3" stroke-linejoin="round" stroke-linecap="round"><path d="M9.8 1.5 H15.5 L22.8 9 V17.5 Q22.8 20.5 19.8 20.5 H9.8 Q6.8 20.5 6.8 17.5 V4.5 Q6.8 1.5 9.8 1.5 Z"/><path d="M15.3 2 V6.5 Q15.3 9.3 18 9.3 H22"/><path d="M6.5 6.5 H4.5 Q1.5 6.5 1.5 9.5 V23 Q1.5 26 4.5 26 H13.5 Q16.5 26 16.5 23 V21"/></g></svg>
<svg class="r" style="left:433px;top:1542.5px;" width="24" height="20" viewBox="0 0 24 20"><path d="M6.4 6.9 L12 13.1 L17.6 6.9" fill="none" stroke="#d6d6e2" stroke-width="2.8" stroke-linecap="round" stroke-linejoin="round"/></svg>
<div class="t ls " style="left:468.8px;top:1538.9px;font-size:28.5px;letter-spacing:0.45px;color:#d6d6e4;transform:scaleX(1.0518);-webkit-text-stroke:1.03px #d6d6e4;">Resource Attributes</div>
<div class="r" style="left:427.5px;top:1582px;width:1160px;height:120px;border:2px solid #2b2b2e;background:#0d0d0d"></div>
<div class="t ls " style="left:443.4px;top:1596.2px;font-size:30px;letter-spacing:-0.03px;color:#8d8e93;-webkit-text-stroke:0.4px #8d8e93;">service.name</div>
<div class="t lm" style="left:695.9000000000001px;top:1603.2px;font-size:24.5px;letter-spacing:1.13px;color:#62ecec;-webkit-text-stroke:0.8px #62ecec">"server993ee62-DO_LONDON"</div>
<svg class="r" style="left:1532.8px;top:1600.5px;" width="24.7" height="27.5" viewBox="0 0 26 29"><g fill="none" stroke="#dcdce8" stroke-width="3" stroke-linejoin="round" stroke-linecap="round"><path d="M9.8 1.5 H15.5 L22.8 9 V17.5 Q22.8 20.5 19.8 20.5 H9.8 Q6.8 20.5 6.8 17.5 V4.5 Q6.8 1.5 9.8 1.5 Z"/><path d="M15.3 2 V6.5 Q15.3 9.3 18 9.3 H22"/><path d="M6.5 6.5 H4.5 Q1.5 6.5 1.5 9.5 V23 Q1.5 26 4.5 26 H13.5 Q16.5 26 16.5 23 V21"/></g></svg>
<div class="r" style="left:429.5px;top:1643.5px;width:1160px;height:60px;background:#1b1b1c;"></div>
<div class="t ls " style="left:443.4px;top:1656.2px;font-size:30px;letter-spacing:0.18px;color:#8d8e93;-webkit-text-stroke:0.4px #8d8e93;">service.version</div>
<div class="t lm" style="left:695.9000000000001px;top:1663.2px;font-size:24.5px;letter-spacing:1.13px;color:#62ecec;-webkit-text-stroke:0.8px #62ecec">"993ee62"</div>
<svg class="r" style="left:1532.8px;top:1660.5px;" width="24.7" height="27.5" viewBox="0 0 26 29"><g fill="none" stroke="#dcdce8" stroke-width="3" stroke-linejoin="round" stroke-linecap="round"><path d="M9.8 1.5 H15.5 L22.8 9 V17.5 Q22.8 20.5 19.8 20.5 H9.8 Q6.8 20.5 6.8 17.5 V4.5 Q6.8 1.5 9.8 1.5 Z"/><path d="M15.3 2 V6.5 Q15.3 9.3 18 9.3 H22"/><path d="M6.5 6.5 H4.5 Q1.5 6.5 1.5 9.5 V23 Q1.5 26 4.5 26 H13.5 Q16.5 26 16.5 23 V21"/></g></svg>
<svg class="r" style="left:1224px;top:1722px;" width="32" height="32" viewBox="0 0 32 32"><g fill="none" stroke="#d0d0dc" stroke-width="2.8" stroke-linecap="round"><path d="M13.2 10.2 L17.6 5.8 A5.6 5.6 0 0 1 25.6 13.8 L21 18.4 A5.6 5.6 0 0 1 13.4 18.6"/><path d="M18.2 21.6 L13.8 26 A5.6 5.6 0 0 1 5.8 18 L10.4 13.4 A5.6 5.6 0 0 1 18 13.2"/></g></svg>
<div class="t ls " style="left:1264.3px;top:1725.7px;font-size:24.5px;letter-spacing:-0.09px;color:#58595f;-webkit-text-stroke:0.4px #58595f;">SpanID:</div>
<div class="t ls " style="left:1361.7px;top:1725.7px;font-size:24.5px;letter-spacing:0.42px;color:#d2d2e0;transform:scaleX(1.0472);-webkit-text-stroke:0.4px #d2d2e0;">7b702bd6f143481a</div>
<svg class="r" style="left:1536px;top:1712px;" width="24" height="22" viewBox="0 0 24 22"><path d="M12 19 V4.5 M5 11 L12 4 L19 11" fill="none" stroke="#6e6f77" stroke-width="2.6" stroke-linecap="round" stroke-linejoin="round"/></svg>
<div class="r" style="left:0px;top:1760px;width:1606px;height:2px;background:#36373c;"></div>
<div class="r" style="left:0px;top:1762px;width:1606px;height:2px;background:#141518;"></div>
<svg class="r" style="left:1431.8px;top:-4.600000000000001px;z-index:9" width="68" height="66" viewBox="-34 -30 68 66"><path d="M0 -28.2 A28.2 28.2 0 0 1 0 28.2 L-15 28.2 Q-23 28.3 -29.4 31.4 Q-31.8 31.6 -31.2 29.2 Q-28.2 23 -28.2 14 L-28.2 0 A28.2 28.2 0 0 1 0 -28.2 Z" fill="#f04e23"/><text x="-0.7" y="10" text-anchor="middle" font-family="Liberation Sans,sans-serif" font-size="30.5" fill="#ffffff" stroke="#ffffff" stroke-width="0.7">1</text></svg>
<svg class="r" style="left:606.6px;top:495.4px;z-index:9" width="68" height="66" viewBox="-34 -30 68 66"><path d="M0 -28.2 A28.2 28.2 0 0 1 0 28.2 L-15 28.2 Q-23 28.3 -29.4 31.4 Q-31.8 31.6 -31.2 29.2 Q-28.2 23 -28.2 14 L-28.2 0 A28.2 28.2 0 0 1 0 -28.2 Z" fill="#f04e23"/><text x="-0.7" y="10" text-anchor="middle" font-family="Liberation Sans,sans-serif" font-size="30.5" fill="#ffffff" stroke="#ffffff" stroke-width="0.7">2</text></svg>
<svg class="r" style="left:825.6px;top:1051.5px;z-index:9" width="68" height="66" viewBox="-34 -30 68 66"><path d="M0 -28.2 A28.2 28.2 0 0 1 0 28.2 L-15 28.2 Q-23 28.3 -29.4 31.4 Q-31.8 31.6 -31.2 29.2 Q-28.2 23 -28.2 14 L-28.2 0 A28.2 28.2 0 0 1 0 -28.2 Z" fill="#f04e23"/><text x="-0.7" y="10" text-anchor="middle" font-family="Liberation Sans,sans-serif" font-size="30.5" fill="#ffffff" stroke="#ffffff" stroke-width="0.7">3</text></svg>
<svg class="r" style="left:754.2px;top:1483.8px;z-index:9" width="68" height="66" viewBox="-34 -30 68 66"><path d="M0 -28.2 A28.2 28.2 0 0 1 0 28.2 L-15 28.2 Q-23 28.3 -29.4 31.4 Q-31.8 31.6 -31.2 29.2 Q-28.2 23 -28.2 14 L-28.2 0 A28.2 28.2 0 0 1 0 -28.2 Z" fill="#f04e23"/><text x="-0.7" y="10" text-anchor="middle" font-family="Liberation Sans,sans-serif" font-size="30.5" fill="#ffffff" stroke="#ffffff" stroke-width="0.7">4</text></svg>
<svg class="r" style="left:1212.7px;top:1653.4px;z-index:9" width="68" height="66" viewBox="-34 -30 68 66"><path d="M0 -28.2 A28.2 28.2 0 0 1 0 28.2 L-15 28.2 Q-23 28.3 -29.4 31.4 Q-31.8 31.6 -31.2 29.2 Q-28.2 23 -28.2 14 L-28.2 0 A28.2 28.2 0 0 1 0 -28.2 Z" fill="#f04e23"/><text x="-0.7" y="10" text-anchor="middle" font-family="Liberation Sans,sans-serif" font-size="30.5" fill="#ffffff" stroke="#ffffff" stroke-width="0.7">5</text></svg>
</body></html>
